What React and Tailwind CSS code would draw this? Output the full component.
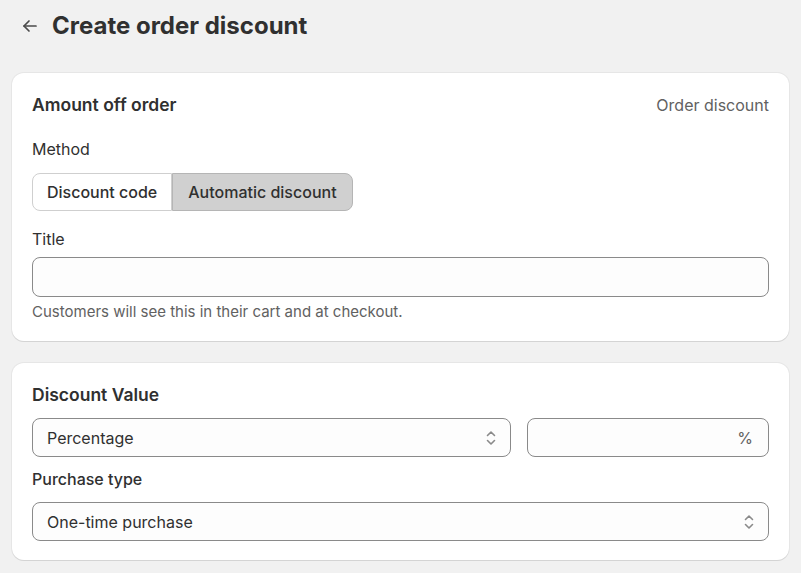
import React from 'react';

const Chevrons = () => (
  <svg width="12" height="20" viewBox="0 0 12 20" fill="none" stroke="#8a8a8a" strokeWidth="1.6" strokeLinecap="round" strokeLinejoin="round">
    <path d="M2.5 7.5 L6 4 L9.5 7.5" />
    <path d="M2.5 12.5 L6 16 L9.5 12.5" />
  </svg>
);

const Card = ({ children, className = '' }) => (
  <div className={`bg-white rounded-xl shadow-[0_1px_0_0_#d4d4d4,0_0_0_1px_#e6e6e6] px-5 ${className}`}>
    {children}
  </div>
);

const SelectBox = ({ value, className = '' }) => (
  <div className={`h-[39px] rounded-lg border border-[#8a8a8a] bg-[#fdfdfd] flex items-center justify-between pl-[14px] pr-[13px] ${className}`}>
    <span className="text-[16px] text-[#303030]">{value}</span>
    <Chevrons />
  </div>
);

export default function App() {
  return (
    <div className="min-h-screen bg-[#f1f1f1] px-3 text-[#303030]" style={{ fontFamily: 'Inter, "Liberation Sans", sans-serif' }}>
      {/* header */}
      <div className="flex items-center h-[50px] pt-[1px]">
        <svg className="ml-[9px] mr-[13px]" width="18" height="18" viewBox="0 0 18 18" fill="none" stroke="#4a4a4a" strokeWidth="1.7" strokeLinecap="round" strokeLinejoin="round">
          <path d="M15 9 H3" />
          <path d="M8 4 L3 9 L8 14" />
        </svg>
        <h1 className="text-[24px] font-bold text-[#303030]">Create order discount</h1>
      </div>

      <div className="pt-[23px] pb-4 flex flex-col gap-[22px]">
        <Card className="pt-[20px] pb-[19px]">
          <div className="flex items-center justify-between h-[24px]">
            <h2 className="text-[17.5px] font-semibold">Amount off order</h2>
            <span className="text-[16px] text-[#616161]">Order discount</span>
          </div>
          <div className="mt-[20px] text-[16px] leading-[24px]">Method</div>
          <div className="mt-[12px] flex">
            <div className="h-[38px] rounded-l-lg border border-[#cfcfcf] bg-white px-[14px] flex items-center text-[16px] font-medium">
              Discount code
            </div>
            <div className="h-[38px] rounded-r-lg border border-[#b5b5b5] bg-[#d0d0d0] px-[15px] flex items-center text-[16px] font-medium">
              Automatic discount
            </div>
          </div>
          <div className="mt-[16px] text-[16px] leading-[24px]">Title</div>
          <div className="mt-[6px] h-[40px] rounded-lg border border-[#8a8a8a] bg-[#fdfdfd]" />
          <p className="mt-[5px] text-[15px] text-[#616161] leading-[20px]">Customers will see this in their cart and at checkout.</p>
        </Card>

        <Card className="pt-[20px] pb-[19px]">
          <h2 className="text-[17.5px] font-semibold h-[24px] flex items-center">Discount Value</h2>
          <div className="mt-[11px] flex gap-4">
            <SelectBox value="Percentage" className="flex-1" />
            <div className="w-[242px] h-[39px] rounded-lg border border-[#8a8a8a] bg-[#fdfdfd] flex items-center justify-end pr-[15px]">
              <span className="text-[16px] text-[#616161]">%</span>
            </div>
          </div>
          <div className="mt-[10px] text-[16px] leading-[24px] font-medium">Purchase type</div>
          <SelectBox value="One-time purchase" className="mt-[11px]" />
        </Card>
      </div>
    </div>
  );
}
